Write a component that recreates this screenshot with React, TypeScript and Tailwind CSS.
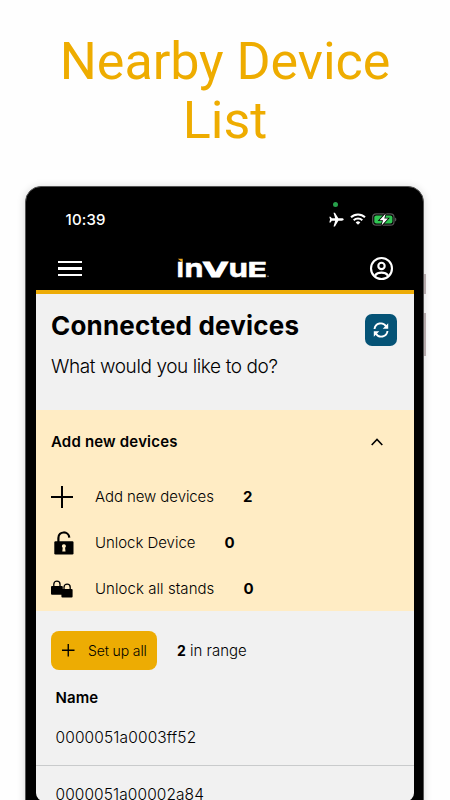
import React from 'react';

const sans = "font-['Inter','Liberation_Sans',sans-serif]";

function StatusBar() {
  return (
    <div className="relative flex h-[60px] items-start justify-between pt-[22px] pr-[17px] pl-[30px] text-white">
      <span className="text-[15px] leading-[22px] font-medium tracking-[0.150px]">10:39</span>
      <span className="absolute top-[15px] left-[297.5px] h-[5px] w-[5px] rounded-full bg-[#27a04b]" />
      <div className="-mt-px flex h-[22px] items-center gap-[6px]">
        <svg width="15" height="15" viewBox="0 0 24 24" fill="#fff">
          <path d="M23.5 12c0-1.100-1.400-1.900-3-1.900h-5.500L9.500 1H7.200l2.700 9.100H4.500L2.500 7.400H.5L1.700 12 .5 16.600h2l2-2.700h5.400L7.200 23h2.300l5.500-9.100h5.500c1.600 0 3-.8 3-1.900z" />
        </svg>
        <svg width="16" height="12" viewBox="0 0 16 12" fill="none" stroke="#fff" strokeWidth="2">
          <path d="M1 4.300a10 10 0 0 1 14 0" />
          <path d="M3.700 7.200a6.200 6.200 0 0 1 8.600 0" />
          <path d="M8 11.800 5.700 9.400a3.300 3.300 0 0 1 4.600 0z" fill="#fff" stroke="none" />
        </svg>
        <svg width="25" height="13" viewBox="0 0 25 13">
          <rect x=".7" y=".8" width="21.300" height="11.400" rx="3.500" fill="#000" stroke="#555" strokeWidth="1.200" />
          <rect x="2.300" y="2.400" width="18.100" height="8.200" rx="2" fill="#30c653" />
          <path d="M23.200 4.500c1.500.5 1.500 3.500 0 4z" fill="#666" />
          <path d="M13.700.4 7.500 7.300h3.500L9.500 12.600l6.500-7h-3.700z" fill="#fff" stroke="#000" strokeWidth="1.600" paintOrder="stroke" />
        </svg>
      </div>
    </div>
  );
}

function Logo() {
  return (
    <svg width="94" height="40" viewBox="0 -10 94 40" className="-ml-[4px] font-['Inter','Liberation_Sans',sans-serif] font-bold" fill="#fff" stroke="#fff" strokeWidth=".5">
      <path d="M.8-.2h4.900v3.700z" fill="#efa91c" stroke="none" />
      <text x="-.2" y="18" fontSize="19.500" textLength="7" lengthAdjust="spacingAndGlyphs">I</text>
      <text x="7.500" y="18" fontSize="25.500" textLength="19" lengthAdjust="spacingAndGlyphs">n</text>
      <text x="25.500" y="18" fontSize="19.500" textLength="26" lengthAdjust="spacingAndGlyphs" strokeWidth="1">V</text>
      <text x="51.500" y="17.700" fontSize="25.500" textLength="19.500" lengthAdjust="spacingAndGlyphs">u</text>
      <text x="70.500" y="18" fontSize="19.500" textLength="19.500" lengthAdjust="spacingAndGlyphs">E</text>
      <circle cx="91" cy="17.300" r=".7" fill="#999" stroke="none" />
    </svg>
  );
}

function NavBar() {
  return (
    <header className="flex h-[43px] items-center justify-between pr-[19.500px] pl-[22.500px]">
      <div className="flex w-6 flex-col gap-[4px]">
        <i className="h-[2.500px] bg-white" />
        <i className="h-[2.500px] bg-white" />
        <i className="h-[2.500px] bg-white" />
      </div>
      <Logo />
      <svg width="25" height="25" viewBox="0 0 26 26" fill="none" stroke="#fff" strokeWidth="2.200">
        <circle cx="13" cy="13" r="10.900" />
        <circle cx="13" cy="10.300" r="3.300" />
        <path d="M6.200 20.300c1.500-2 3.800-3 6.800-3s5.300 1 6.800 3" />
      </svg>
    </header>
  );
}

function Plus({ size, width }: { size: number; width: number }) {
  return (
    <svg width={size} height={size} viewBox="0 0 22 22" stroke="#000" strokeWidth={width}>
      <path d="M11 0v22M0 11h22" />
    </svg>
  );
}

function OpenLock() {
  return (
    <svg width="20" height="24" viewBox="0 0 20 24">
      <path d="M4.400 11V7c0-7.300 10.500-7.300 10.900-.4" fill="none" stroke="#000" strokeWidth="2.200" />
      <rect x=".3" y="10.200" width="19.200" height="13.300" rx="1.200" />
      <path d="M9.900 13.200a2 2 0 0 1 1.200 3.600l.4 3.800H8.300l.4-3.800a2 2 0 0 1 1.200-3.600z" fill="#ffecc4" />
    </svg>
  );
}

function TwoLocks() {
  return (
    <svg width="22" height="18" viewBox="0 0 22 18">
      <path d="M2.800 7V4.200a3.100 3.100 0 0 1 6.200 0V7" fill="none" stroke="#000" strokeWidth="1.300" />
      <rect x="0" y="6" width="11.800" height="8.800" rx="1" />
      <path d="M13 10V7.200a3.100 3.100 0 0 1 6.200 0V10" fill="none" stroke="#000" strokeWidth="1.300" />
      <rect x="10.400" y="9" width="11.200" height="8.600" rx="1" />
    </svg>
  );
}

function Action({ icon, spacing, children, count }: { icon: React.ReactNode; spacing: string; children: React.ReactNode; count: number }) {
  return (
    <div className="flex h-[46px] items-center">
      <div className="-mt-px flex w-[44px] shrink-0">{icon}</div>
      <span className={`mr-[29px] text-[15px] font-light ${spacing}`}>{children}</span>
      <b className="text-[15px] font-bold">{count}</b>
    </div>
  );
}

export default function App() {
  return (
    <main className={`h-[800px] w-[450px] overflow-hidden bg-[#fefefe] text-black ${sans}`}>
      <h1 className="h-[186px] pt-[32px] text-center font-['Roboto',sans-serif] text-[52px] leading-[59px] font-normal tracking-[-0.050px] text-[#eeac00]">
        Nearby Device
        <br />
        List
      </h1>
      <div className="relative ml-[25px] h-[620px] w-[399px]">
        <span className="absolute top-[88px] -right-[2px] h-[20px] w-[2px] bg-[#b5aaac]" />
        <span className="absolute top-[127px] -right-[2px] h-[43px] w-[2px] bg-[#b5aaac]" />
        <div className="h-full rounded-t-[16px] border border-[#555] bg-black px-[9.500px] shadow-[0_1px_9px_rgba(0,0,0,0.16)]">
          <StatusBar />
          <NavBar />
          <div className="h-[511px] overflow-hidden rounded-b-[8px] border-t-[4px] border-[#edac07] bg-[#f1f1f1]">
            <section className="flex h-[116px] justify-between pt-[16px] pr-[17px] pl-[15.500px]">
              <div>
                <h2 className="text-[26px] leading-[31px] font-bold tracking-[0.190px]">Connected devices</h2>
                <p className="mt-[13px] text-[19px] leading-[26px] font-light tracking-[-0.400px]">What would you like to do?</p>
              </div>
              <button className="mt-[4px] flex h-8 w-8 items-center justify-center rounded-[7px] bg-[#055376]">
                <svg width="16" height="16" viewBox="0 0 16 16" fill="none" stroke="#fff" strokeWidth="1.900">
                  <path d="M1.500 7A6.300 6.300 0 0 1 13.200 4.500M14.500 9A6.300 6.300 0 0 1 2.800 11.500" />
                  <path d="M15.200 1.200v5.500H9.700zM.8 14.800V9.300h5.500z" fill="#fff" stroke="none" />
                </svg>
              </button>
            </section>
            <section className="h-[201px] bg-[#ffecc4] px-[15.500px] pt-[10px]">
              <div className="flex h-[45px] items-center justify-between pr-[15px]">
                <h3 className="text-[15px] font-semibold tracking-[0.180px]">Add new devices</h3>
                <svg className="-mt-[2px]" width="12" height="8" viewBox="0 0 12 8" fill="none" stroke="#000" strokeWidth="1.600">
                  <path d="m.7 7 5.300-5.500L11.300 7" />
                </svg>
              </div>
              <div className="pt-[9px]">
                <Action icon={<Plus size={22} width={2} />} spacing="tracking-[-0.080px]" count={2}>Add new devices</Action>
                <Action icon={<div className="ml-[3px]"><OpenLock /></div>} spacing="tracking-[-0.040px]" count={0}>Unlock Device</Action>
                <Action icon={<TwoLocks />} spacing="tracking-[0.060px]" count={0}>Unlock all stands</Action>
              </div>
            </section>
            <section className="pt-[20px]">
              <div className="flex items-center pl-[15.500px]">
                <button className="flex h-[39px] w-[106px] items-center rounded-[8px] bg-[#edac03] pl-[11px]">
                  <Plus size={12.5} width={2.4} />
                  <span className="ml-[13.500px] text-[14px] font-light tracking-[-0.120px] whitespace-nowrap">Set up all</span>
                </button>
                <p className="mt-px ml-[20px] text-[15px] font-light"><b className="text-[14px] font-bold">2</b> in range</p>
              </div>
              <h3 className="mt-[17px] pl-[20px] text-[15px] leading-[22px] font-semibold tracking-[0.080px]">Name</h3>
              <div className="flex h-[57px] items-center border-b border-[#c9cbcc] pt-[2px] pl-[20px] text-[15.500px] font-light tracking-[0.130px]">0000051a0003ff52</div>
              <div className="pt-[17px] pl-[20px] text-[15.500px] leading-[23px] font-light tracking-[0.080px]">0000051a00002a84</div>
            </section>
          </div>
        </div>
      </div>
    </main>
  );
}
